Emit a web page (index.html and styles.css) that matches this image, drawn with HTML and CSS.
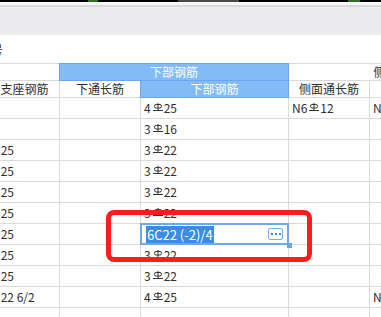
FILE: index.html
```html
<!DOCTYPE html>
<html lang="zh">
<head>
<meta charset="utf-8">
<title>钢筋表</title>
<link rel="stylesheet" href="styles.css">
</head>
<body>
<div class="topbar">
  <span class="bk w88"></span><span class="gdot"></span><span class="bk w80"></span><span class="gseg"></span><span class="bk grow"></span><span class="gdot w12"></span><span class="bk w21"></span>
</div>
<div class="band"></div>
<div class="toolbar"></div>
<div class="label">号</div>
<div class="grid">
  <div class="c"></div>
  <div class="c h blue span2">下部钢筋</div>
  <div class="c h span2">侧面钢筋</div>

  <div class="c h">右支座钢筋</div>
  <div class="c h">下通长筋</div>
  <div class="c h blue">下部钢筋</div>
  <div class="c h">侧面通长筋</div>
  <div class="c h">侧面原位标注筋</div>

  <div class="c"></div><div class="c"></div>
  <div class="c">4<svg class="rb" viewBox="0 0 13 8"><rect x="3.5" y="1.5" width="7" height="3.5" rx="1.6"/><path d="M7 0V7.5M2 7.5H12"/></svg>25</div>
  <div class="c">N6<svg class="rb" viewBox="0 0 13 8"><rect x="3.5" y="1.5" width="7" height="3.5" rx="1.6"/><path d="M7 0V7.5M2 7.5H12"/></svg>12</div>
  <div class="c">N6<svg class="rb" viewBox="0 0 13 8"><rect x="3.5" y="1.5" width="7" height="3.5" rx="1.6"/><path d="M7 0V7.5M2 7.5H12"/></svg>12</div>

  <div class="c"></div><div class="c"></div>
  <div class="c">3<svg class="rb" viewBox="0 0 13 8"><rect x="3.5" y="1.5" width="7" height="3.5" rx="1.6"/><path d="M7 0V7.5M2 7.5H12"/></svg>16</div>
  <div class="c"></div><div class="c"></div>

  <div class="c">4<svg class="rb" viewBox="0 0 13 8"><rect x="3.5" y="1.5" width="7" height="3.5" rx="1.6"/><path d="M7 0V7.5M2 7.5H12"/></svg>25</div><div class="c"></div>
  <div class="c">3<svg class="rb" viewBox="0 0 13 8"><rect x="3.5" y="1.5" width="7" height="3.5" rx="1.6"/><path d="M7 0V7.5M2 7.5H12"/></svg>22</div>
  <div class="c"></div><div class="c"></div>

  <div class="c">4<svg class="rb" viewBox="0 0 13 8"><rect x="3.5" y="1.5" width="7" height="3.5" rx="1.6"/><path d="M7 0V7.5M2 7.5H12"/></svg>25</div><div class="c"></div>
  <div class="c">3<svg class="rb" viewBox="0 0 13 8"><rect x="3.5" y="1.5" width="7" height="3.5" rx="1.6"/><path d="M7 0V7.5M2 7.5H12"/></svg>22</div>
  <div class="c"></div><div class="c"></div>

  <div class="c">4<svg class="rb" viewBox="0 0 13 8"><rect x="3.5" y="1.5" width="7" height="3.5" rx="1.6"/><path d="M7 0V7.5M2 7.5H12"/></svg>25</div><div class="c"></div>
  <div class="c">3<svg class="rb" viewBox="0 0 13 8"><rect x="3.5" y="1.5" width="7" height="3.5" rx="1.6"/><path d="M7 0V7.5M2 7.5H12"/></svg>22</div>
  <div class="c"></div><div class="c"></div>

  <div class="c">4<svg class="rb" viewBox="0 0 13 8"><rect x="3.5" y="1.5" width="7" height="3.5" rx="1.6"/><path d="M7 0V7.5M2 7.5H12"/></svg>25</div><div class="c"></div>
  <div class="c">3<svg class="rb" viewBox="0 0 13 8"><rect x="3.5" y="1.5" width="7" height="3.5" rx="1.6"/><path d="M7 0V7.5M2 7.5H12"/></svg>22</div>
  <div class="c"></div><div class="c"></div>

  <div class="c">4<svg class="rb" viewBox="0 0 13 8"><rect x="3.5" y="1.5" width="7" height="3.5" rx="1.6"/><path d="M7 0V7.5M2 7.5H12"/></svg>25</div><div class="c"></div>
  <div class="c ed"><span class="sel">6C22 (-2)/4</span><span class="more"><i></i><i></i><i></i></span><span class="handle"></span></div>
  <div class="c"></div><div class="c"></div>

  <div class="c">4<svg class="rb" viewBox="0 0 13 8"><rect x="3.5" y="1.5" width="7" height="3.5" rx="1.6"/><path d="M7 0V7.5M2 7.5H12"/></svg>25</div><div class="c"></div>
  <div class="c">3<svg class="rb" viewBox="0 0 13 8"><rect x="3.5" y="1.5" width="7" height="3.5" rx="1.6"/><path d="M7 0V7.5M2 7.5H12"/></svg>22</div>
  <div class="c"></div><div class="c"></div>

  <div class="c">4<svg class="rb" viewBox="0 0 13 8"><rect x="3.5" y="1.5" width="7" height="3.5" rx="1.6"/><path d="M7 0V7.5M2 7.5H12"/></svg>25</div><div class="c"></div>
  <div class="c">3<svg class="rb" viewBox="0 0 13 8"><rect x="3.5" y="1.5" width="7" height="3.5" rx="1.6"/><path d="M7 0V7.5M2 7.5H12"/></svg>22</div>
  <div class="c"></div><div class="c"></div>

  <div class="c">4<svg class="rb" viewBox="0 0 13 8"><rect x="3.5" y="1.5" width="7" height="3.5" rx="1.6"/><path d="M7 0V7.5M2 7.5H12"/></svg>22 6/2</div><div class="c"></div>
  <div class="c">4<svg class="rb" viewBox="0 0 13 8"><rect x="3.5" y="1.5" width="7" height="3.5" rx="1.6"/><path d="M7 0V7.5M2 7.5H12"/></svg>25</div>
  <div class="c"></div>
  <div class="c">N4<svg class="rb" viewBox="0 0 13 8"><rect x="3.5" y="1.5" width="7" height="3.5" rx="1.6"/><path d="M7 0V7.5M2 7.5H12"/></svg>12</div>

  <div class="c"></div><div class="c"></div><div class="c"></div><div class="c"></div><div class="c"></div>
</div>
<div class="mark"></div>
</body>
</html>
```

FILE: styles.css
```css
html, body {
  margin: 0;
  padding: 0;
}
body {
  width: 381px;
  height: 317px;
  overflow: hidden;
  position: relative;
  background: #ffffff;
  font-family: "Noto Sans CJK SC", "Noto Sans", sans-serif;
  font-size: 12px;
  color: #2e2e2e;
}
.topbar {
  display: flex;
  height: 2px;
  background: #000;
}
.topbar span { display: block; height: 2px; }
.bk { background: #000; }
.w88 { width: 88px; }
.w80 { width: 80px; }
.w21 { width: 21px; }
.grow { flex: 1; }
.gdot { width: 10px; background: #2f6f2a; }
.gdot.w12 { width: 12px; }
.gseg { width: 61px; background: #4a4a4a; }
.band {
  height: 3px;
  background: #f7f7f8;
  border-bottom: 2px solid #d9d9db;
}
.toolbar {
  height: 28px;
  background: #ececee;
}
.label {
  height: 28px;
  box-sizing: border-box;
  padding-top: 6px;
  line-height: 17px;
  margin-left: -9px;
}
.grid {
  display: grid;
  grid-template-columns: 81px 80px 147px 80px 136px;
  grid-template-rows: 16px 16px repeat(11, 20px);
  gap: 1px;
  margin-left: -22px;
  width: 528px;
  background: #dadada;
  border-top: 1px solid #dadada;
}
.c {
  background: #fff;
  white-space: nowrap;
  overflow: hidden;
  line-height: 20px;
  padding-left: 3px;
}
.h {
  line-height: 16px;
  text-align: center;
  padding-left: 0;
}
.span2 { grid-column: span 2; }
.blue {
  background: #82bbf6;
  color: #ffffff;
  outline: 1px solid #68a7ee;
}
.rb {
  width: 13px;
  height: 8px;
  vertical-align: 2px;
  fill: none;
  stroke: #333;
  stroke-width: 1;
}
.ed {
  display: flex;
  align-items: center;
  position: relative;
  overflow: visible;
  padding-left: 5px;
  outline: 2px solid #6ea8e6;
  outline-offset: -1px;
}
.sel {
  background: #3a8de6;
  color: #fff;
  font-size: 13px;
  line-height: 17px;
  padding: 0 1px;
}
.more {
  margin-left: auto;
  margin-right: 5px;
  width: 15px;
  height: 12px;
  box-sizing: border-box;
  border: 1px solid #7aaee6;
  border-radius: 2px;
  background: #fff;
  display: flex;
  align-items: center;
  justify-content: center;
  gap: 2px;
}
.more i {
  display: block;
  width: 2px;
  height: 2px;
  background: #3f87da;
}
.handle {
  position: absolute;
  right: -4px;
  bottom: -4px;
  width: 5px;
  height: 5px;
  background: #6aa5e4;
}
.mark {
  position: absolute;
  left: 106px;
  top: 210px;
  width: 206px;
  height: 52px;
  box-sizing: border-box;
  border: 5px solid #fe1c1c;
  border-radius: 8px;
}
```
